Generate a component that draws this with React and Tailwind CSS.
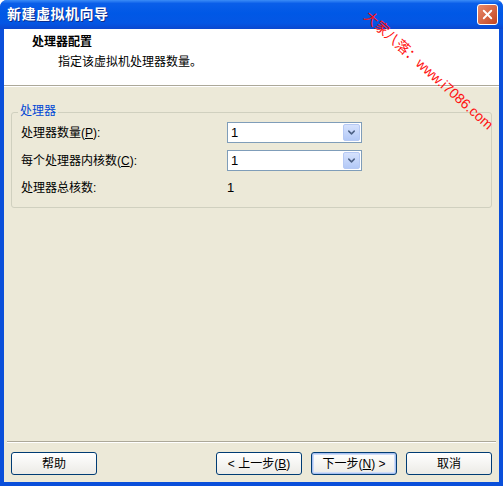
import { ChevronDown, X } from "lucide-react";

const font = { fontFamily: '"Liberation Sans", "Noto Sans CJK SC", sans-serif' };

function Combo({ value }) {
  return (
    <div className="flex h-[21px] w-[135px] items-center justify-between border border-[#7F9DB9] bg-white pl-[3px] pr-[1px]">
      <span className="text-[13px] leading-none text-black">{value}</span>
      <span className="flex h-[17px] w-[17px] items-center justify-center rounded-[2px] border border-[#B6C9F4] bg-gradient-to-b from-[#D6E2FD] to-[#B3C9F7]">
        <ChevronDown size={11} strokeWidth={3.2} className="text-[#4D6185]" />
      </span>
    </div>
  );
}

function Btn({ children, primary }) {
  return (
    <button
      className={`flex h-[23px] w-[86px] items-center justify-center rounded-[3px] border border-[#003C74] bg-gradient-to-b from-white to-[#ECEBE6] text-[12px] text-black ${
        primary ? "shadow-[inset_0_0_0_1px_#A8C0F0,inset_0_0_0_2px_#CEDCF7]" : ""
      }`}
    >
      {children}
    </button>
  );
}

export default function App() {
  return (
    <div className="h-[486px] w-[503px] bg-white" style={font}>
      <div className="relative flex h-full w-full flex-col overflow-hidden rounded-t-[7px] bg-[#0A4FDA]">
        {/* title bar */}
        <div className="flex h-[29px] shrink-0 items-center justify-between bg-[linear-gradient(to_bottom,#3B8CF7_0%,#0A5EE9_12%,#0058E6_45%,#0456E4_80%,#0B47CF_100%)] pl-[7px] pr-[5px]">
          <span className="text-[14px] font-bold tracking-[0.5px] text-white [text-shadow:1px_1px_0_#0B2C8C]">
            新建虚拟机向导
          </span>
          <span className="flex h-[21px] w-[21px] items-center justify-center rounded-[3px] border border-white bg-gradient-to-br from-[#E88A6B] to-[#C3431E]">
            <X size={15} strokeWidth={3} className="text-white" />
          </span>
        </div>

        <div className="mx-[4px] mb-[4px] flex flex-1 flex-col bg-[#ECE9D8]">
          {/* header */}
          <div className="flex h-[57px] flex-col border-b border-[#ACA899] bg-white pt-[4px] shadow-[0_1px_0_white]">
            <div className="pl-[28px] pt-[1px] text-[12px] font-bold leading-[16px] text-black">处理器配置</div>
            <div className="pl-[54px] pt-[4px] text-[12px] leading-[16px] text-black">指定该虚拟机处理器数量。</div>
          </div>

          {/* group box */}
          <div className="px-[7px] pt-[26px]">
            <div className="relative rounded-[3px] border border-[#D0D0BF] px-[9px] pb-[9px] pt-[9px]">
              <span className="absolute -top-[10px] left-[6px] bg-[#ECE9D8] px-[2px] text-[12px] leading-[16px] text-[#0046D5]">
                处理器
              </span>
              <div className="flex flex-col gap-[7px] text-[12px] text-black">
                <div className="flex items-center">
                  <span className="w-[206px]">
                    处理器数量(<span className="underline">P</span>):
                  </span>
                  <Combo value="1" />
                </div>
                <div className="flex items-center">
                  <span className="w-[206px]">
                    每个处理器内核数(<span className="underline">C</span>):
                  </span>
                  <Combo value="1" />
                </div>
                <div className="flex items-center">
                  <span className="w-[206px]">处理器总核数:</span>
                  <span className="text-[13px]">1</span>
                </div>
              </div>
            </div>
          </div>

          <div className="flex-1" />

          {/* footer */}
          <div className="mx-[3px] border-t border-[#ACA899] shadow-[0_1px_0_white]" />
          <div className="flex items-center justify-between px-[7px] pb-[7px] pt-[10px]">
            <Btn>帮助</Btn>
            <div className="flex gap-[9px]">
              <Btn>&lt; 上一步(<span className="underline">B</span>)</Btn>
              <Btn primary>
                下一步(<span className="underline">N</span>) &gt;
              </Btn>
              <Btn>取消</Btn>
            </div>
          </div>
        </div>

        {/* watermark */}
        <div className="pointer-events-none absolute left-[366px] top-[4px] origin-left rotate-[42deg] whitespace-nowrap text-[14px] text-[#FF1010]">
          大家八落：www.i7086.com
        </div>
      </div>
    </div>
  );
}
